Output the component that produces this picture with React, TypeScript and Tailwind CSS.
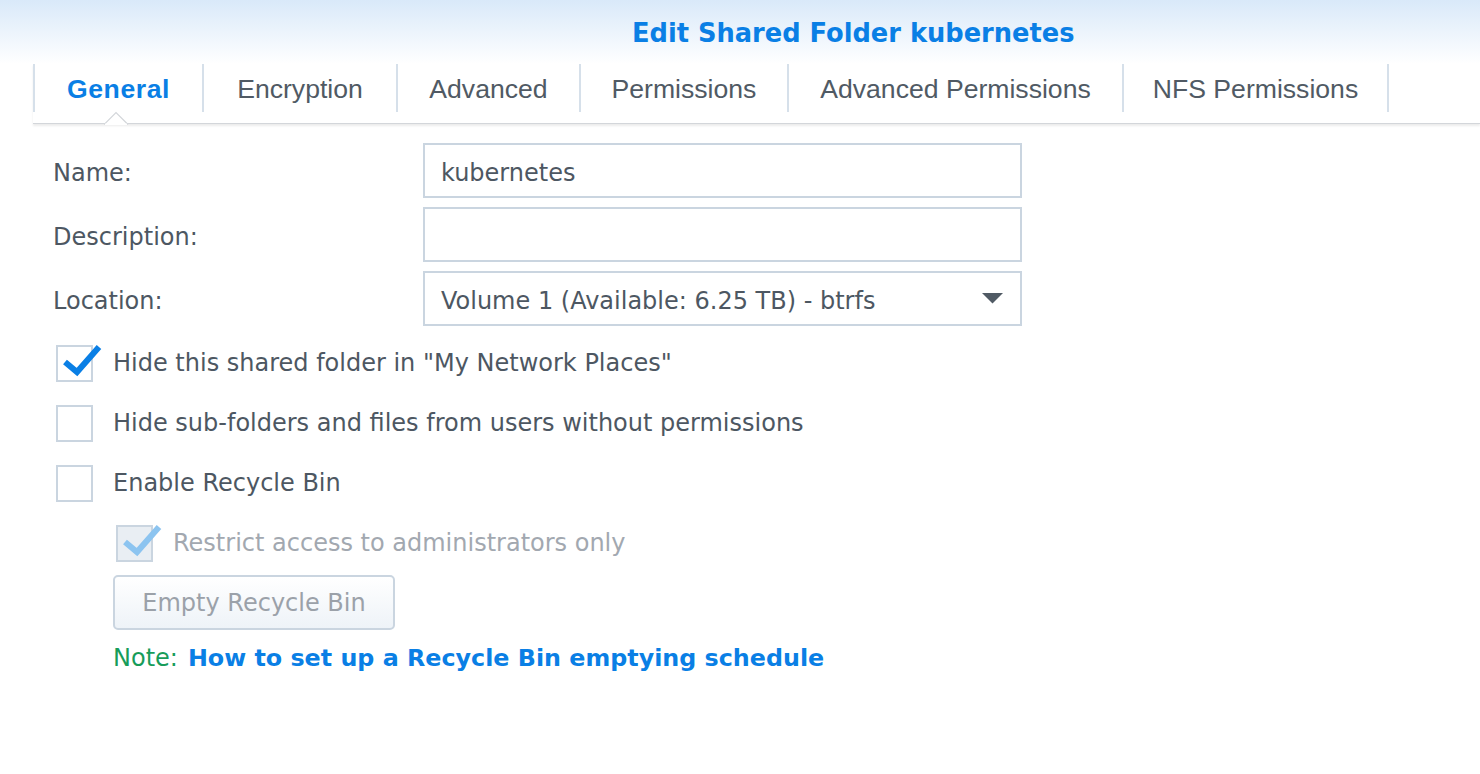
import React from 'react';

const tabs = [
  { label: 'General', width: 171 },
  { label: 'Encryption', width: 194 },
  { label: 'Advanced', width: 183 },
  { label: 'Permissions', width: 208 },
  { label: 'Advanced Permissions', width: 335 },
  { label: 'NFS Permissions', width: 265 },
];

const bodyFont = "font-['DejaVu_Sans',Verdana,sans-serif]";

function CheckMark({ disabled }: { disabled?: boolean }) {
  return (
    <svg className="absolute left-[2px] top-[-7px]" width="42" height="40" viewBox="0 0 42 40">
      <path
        d="M5 22 L17 32 L39 7"
        fill="none"
        stroke={disabled ? '#8cc4f0' : '#0a7fe5'}
        strokeWidth="6"
        strokeLinecap="butt"
        strokeLinejoin="miter"
      />
    </svg>
  );
}

function Checkbox({ checked, disabled, label }: { checked?: boolean; disabled?: boolean; label: string }) {
  return (
    <div className="flex items-center h-[60px]">
      <div
        className={`relative w-[37px] h-[37px] border-2 border-[#cad5e0] ${disabled ? 'bg-[#e9eef3]' : 'bg-white'}`}
      >
        {checked && <CheckMark disabled={disabled} />}
      </div>
      <span className={`ml-[20px] text-[24px] ${disabled ? 'text-[#a2a8b0]' : 'text-[#4d5762]'}`}>{label}</span>
    </div>
  );
}

function Field({ label, children }: { label: string; children: React.ReactNode }) {
  return (
    <div className="flex items-center h-[64px]">
      <div className="w-[370px] pt-[6px] text-[24px] text-[#4d5762]">{label}</div>
      {children}
    </div>
  );
}

export default function App() {
  return (
    <div className={`w-[1480px] h-[774px] bg-white overflow-hidden ${bodyFont}`}>
      <div className="h-[64px] pt-[4px] bg-gradient-to-b from-[#d9e9f9] to-white flex items-center pl-[632px]">
        <h1 className="text-[25.7px] font-bold text-[#0a7fe5] leading-none">
          Edit Shared Folder kubernetes
        </h1>
      </div>

      <div className="ml-[33px] relative">
        <div className="flex h-[60px] border-b border-[#d3d6da] shadow-[0_2px_2px_rgba(0,0,0,0.08)]">
          {tabs.map((t, i) => (
            <div
              key={t.label}
              style={{ width: t.width }}
              className={`relative flex items-center justify-center h-[48px] pt-[4px] border-r-2 border-[#d6e0ea] ${
                i === 0 ? 'border-l-2' : ''
              } font-['Liberation_Sans',Arial,sans-serif] text-[26.6px] ${
                i === 0 ? 'text-[#0a7fe5] font-bold tracking-[0.6px]' : 'text-[#505a64]'
              }`}
            >
              {t.label}
            </div>
          ))}
        </div>
        <svg className="absolute left-[71px] top-[47px]" width="26" height="14" viewBox="0 0 26 14">
          <path d="M0 13.5 L12 1.5 L24 13.5" fill="white" stroke="#d3d6da" strokeWidth="1.2" />
          <rect x="1" y="12.6" width="22" height="2" fill="white" />
        </svg>
      </div>

      <div className="pl-[53px] pt-[14px]">
        <Field label="Name:">
          <div className="w-[599px] h-[55px] pt-[5px] border-2 border-[#cad5e0] flex items-center px-[16px] text-[24px] text-[#4d5762]">
            kubernetes
          </div>
        </Field>
        <Field label="Description:">
          <div className="w-[599px] h-[55px] border-2 border-[#cad5e0]" />
        </Field>
        <Field label="Location:">
          <div className="w-[599px] h-[55px] border-2 border-[#cad5e0] flex items-center justify-between pl-[16px] pr-[16px] text-[24px] text-[#4d5762]">
            <span className="pt-[5px]">Volume 1 (Available: 6.25 TB) - btrfs</span>
            <svg width="22" height="11" viewBox="0 0 22 11">
              <path d="M0 0 H21 L10.5 10.5 Z" fill="#505a64" />
            </svg>
          </div>
        </Field>

        <div className="pl-[3px] mt-[3px]">
          <Checkbox checked label={'Hide this shared folder in "My Network Places"'} />
          <Checkbox label="Hide sub-folders and files from users without permissions" />
          <Checkbox label="Enable Recycle Bin" />
          <div className="pl-[60px]">
            <Checkbox checked disabled label="Restrict access to administrators only" />
          </div>
        </div>

        <div className="pl-[60px] mt-[2px]">
          <button className="w-[282px] h-[55px] rounded-[5px] border-2 border-[#cad5e0] bg-gradient-to-b from-white to-[#eef3f8] text-[24px] text-[#9ba1a9]">
            Empty Recycle Bin
          </button>
          <div className="mt-[16px] text-[24px] leading-none flex items-baseline">
            <span className="text-[#179c5a]">Note:</span>
            <span className="ml-[10px] font-bold text-[#0a7fe5] text-[23.8px]">
              How to set up a Recycle Bin emptying schedule
            </span>
          </div>
        </div>
      </div>
    </div>
  );
}
